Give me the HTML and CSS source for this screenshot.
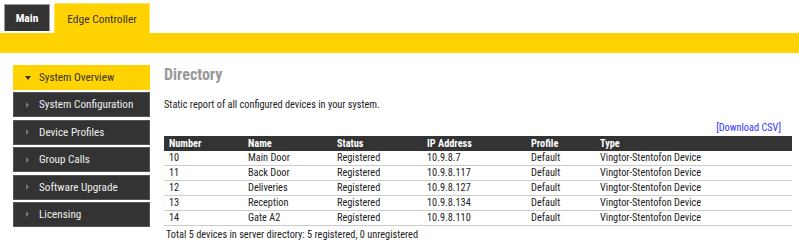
FILE: index.html
```html
<!DOCTYPE html>
<html>
<head>
<meta charset="utf-8">
<link rel="stylesheet" href="styles.css">
</head>
<body>
<div class="tabs">
  <div class="tab tab-dark">Main</div>
  <div class="tab tab-active">Edge Controller</div>
</div>
<div class="bar"></div>
<div class="page">
  <nav class="side">
    <div class="item active"><span class="arr down"></span>System Overview</div>
    <div class="item"><span class="arr"></span>System Configuration</div>
    <div class="item"><span class="arr"></span>Device Profiles</div>
    <div class="item"><span class="arr"></span>Group Calls</div>
    <div class="item"><span class="arr"></span>Software Upgrade</div>
    <div class="item"><span class="arr"></span>Licensing</div>
  </nav>
  <main class="content">
    <h1 class="title">Directory</h1>
    <p class="desc">Static report of all configured devices in your system.</p>
    <div class="csv"><a href="#">[Download CSV]</a></div>
    <table class="dir">
      <thead>
        <tr><th class="c1">Number</th><th class="c2">Name</th><th class="c3">Status</th><th class="c4">IP Address</th><th class="c5">Profile</th><th class="c6">Type</th></tr>
      </thead>
      <tbody>
        <tr><td>10</td><td>Main Door</td><td>Registered</td><td>10.9.8.7</td><td>Default</td><td>Vingtor-Stentofon Device</td></tr>
        <tr><td>11</td><td>Back Door</td><td>Registered</td><td>10.9.8.117</td><td>Default</td><td>Vingtor-Stentofon Device</td></tr>
        <tr><td>12</td><td>Deliveries</td><td>Registered</td><td>10.9.8.127</td><td>Default</td><td>Vingtor-Stentofon Device</td></tr>
        <tr><td>13</td><td>Reception</td><td>Registered</td><td>10.9.8.134</td><td>Default</td><td>Vingtor-Stentofon Device</td></tr>
        <tr><td>14</td><td>Gate A2</td><td>Registered</td><td>10.9.8.110</td><td>Default</td><td>Vingtor-Stentofon Device</td></tr>
      </tbody>
    </table>
    <p class="total">Total 5 devices in server directory: 5 registered, 0 unregistered</p>
  </main>
</div>
</body>
</html>
```
FILE: styles.css
```css
html, body {
  margin: 0;
  padding: 0;
  background: #fff;
}
body {
  font-family: "Roboto Condensed", "Liberation Sans Narrow", "Arial Narrow", Roboto, sans-serif;
  font-size: 10.3px;
  color: #222;
  width: 799px;
  overflow: hidden;
}
.tabs {
  display: flex;
  gap: 4px;
  padding: 3px 0 0 4px;
  height: 30px;
  box-sizing: border-box;
}
.tab {
  height: 27px;
  display: flex;
  align-items: center;
  font-size: 11.5px;
  box-sizing: border-box;
}
.tab-dark {
  width: 46px;
  justify-content: center;
  background: #333;
  color: #fff;
  font-weight: bold;
  border: 1px solid #9a9a9a;
  border-bottom: none;
  margin-top: 1px;
}
.tab-active {
  width: 96px;
  justify-content: center;
  background: #ffd200;
  color: #333;
  height: 30px;
  border: 1px solid #ffe566;
  border-bottom: none;
}
.bar {
  height: 20px;
  background: #ffd200;
  margin-top: 3px;
}
.page {
  display: flex;
  padding: 12px 4px 0 13px;
  gap: 14px;
}
.side {
  width: 137px;
  flex: none;
  display: flex;
  flex-direction: column;
  gap: 2.4px;
}
.item {
  height: 25px;
  box-sizing: border-box;
  background: #333;
  border: 1px solid #555;
  color: #eee;
  font-size: 11.2px;
  display: flex;
  align-items: center;
  padding-left: 12px;
}
.item.active {
  background: #ffd200;
  border-color: #ffd200;
  color: #333;
}
.arr {
  width: 0;
  height: 0;
  border-top: 3px solid transparent;
  border-bottom: 3px solid transparent;
  border-left: 3px solid #777;
  margin-right: 10px;
}
.arr.down {
  border-left: 3px solid transparent;
  border-right: 3px solid transparent;
  border-top: 4px solid #333;
  border-bottom: none;
  margin-right: 8px;
  margin-left: -1px;
}
.content {
  flex: 1;
  min-width: 0;
}
.title {
  margin: 0;
  font-size: 16px;
  color: #999;
  font-weight: bold;
  line-height: 20px;
}
.desc {
  margin: 13px 0 0;
  line-height: 14px;
}
.csv {
  text-align: right;
  margin-top: 10px;
  padding-right: 14px;
  line-height: 12px;
}
.csv a {
  color: #3333ff;
  text-decoration: none;
}
.dir {
  width: 628px;
  border-collapse: collapse;
  margin-top: 2px;
}
.dir th {
  background: #333;
  color: #fff;
  text-align: left;
  font-weight: bold;
  height: 15px;
  padding: 0 5px;
}
.dir td {
  height: 14px;
  padding: 0 5px;
  border-bottom: 1px solid #ccc;
  line-height: 14px;
}
.c1 { width: 69px; }
.c2 { width: 79px; }
.c3 { width: 80px; }
.c4 { width: 94px; }
.c5 { width: 59px; }
.total {
  margin: 2px 0 0 2px;
  line-height: 14px;
}
```
